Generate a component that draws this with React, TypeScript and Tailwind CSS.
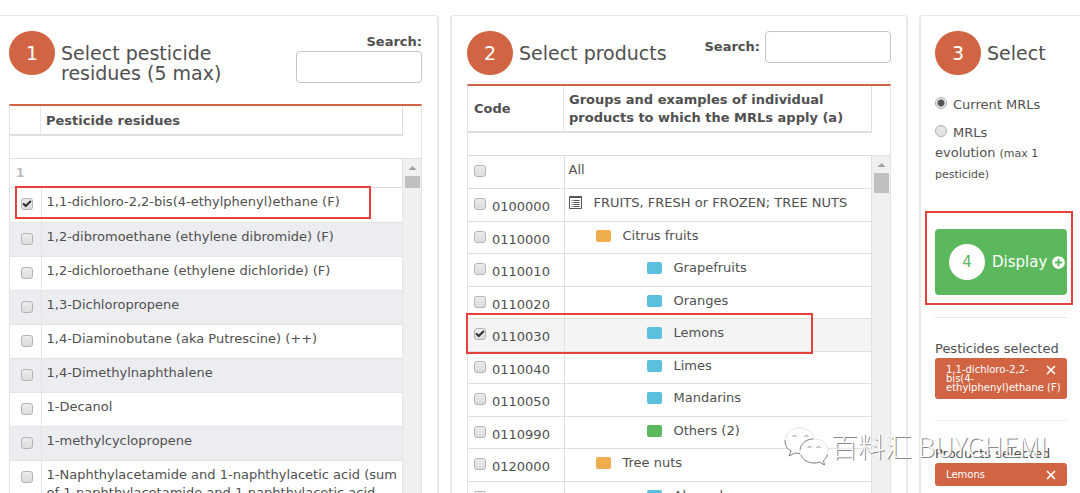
import type { ReactNode } from 'react'
import { Check, X } from 'lucide-react'
import { FaPlusCircle } from 'react-icons/fa'

const residues = [
  '1,1-dichloro-2,2-bis(4-ethylphenyl)ethane (F)',
  '1,2-dibromoethane (ethylene dibromide) (F)',
  '1,2-dichloroethane (ethylene dichloride) (F)',
  '1,3-Dichloropropene',
  '1,4-Diaminobutane (aka Putrescine) (++)',
  '1,4-Dimethylnaphthalene',
  '1-Decanol',
  '1-methylcyclopropene',
  '1-Naphthylacetamide and 1-naphthylacetic acid (sum of 1-naphthylacetamide and 1-naphthylacetic acid and its salts)',
]

type Kind = 'all' | 'root' | 'group' | 'item' | 'other'

const products: { code: string; name: string; kind: Kind }[] = [
  { code: '', name: 'All', kind: 'all' },
  { code: '0100000', name: 'FRUITS, FRESH or FROZEN; TREE NUTS', kind: 'root' },
  { code: '0110000', name: 'Citrus fruits', kind: 'group' },
  { code: '0110010', name: 'Grapefruits', kind: 'item' },
  { code: '0110020', name: 'Oranges', kind: 'item' },
  { code: '0110030', name: 'Lemons', kind: 'item' },
  { code: '0110040', name: 'Limes', kind: 'item' },
  { code: '0110050', name: 'Mandarins', kind: 'item' },
  { code: '0110990', name: 'Others (2)', kind: 'other' },
  { code: '0120000', name: 'Tree nuts', kind: 'group' },
  { code: '0120010', name: 'Almonds', kind: 'item' },
]

const markers: Record<Kind, ReactNode> = {
  all: null,
  root: <ListIcon />,
  group: <span className="ml-[27px] mr-3 h-3 w-[15px] rounded-[2px] bg-[#f0ad4e]" />,
  item: <span className="ml-[78px] mr-3 h-3 w-[15px] rounded-[2px] bg-[#5bc0de]" />,
  other: <span className="ml-[78px] mr-3 h-3 w-[15px] rounded-[2px] bg-[#5cb85c]" />,
}

function ListIcon() {
  return (
    <svg viewBox="0 0 13 13" className="mr-3 size-[13px]" fill="none" stroke="#555">
      <path d="M.5.5h12v12H.5z" />
      <path d="M1 1.5h11" />
      <path d="M2.5 4.5h1M2.5 6.5h1M2.5 8.5h1M2.5 10.5h1M4.5 4.5h6M4.5 6.5h6M4.5 8.5h6M4.5 10.5h6" />
    </svg>
  )
}

function WeChatIcon() {
  return (
    <svg viewBox="0 0 46 40" className="h-10 w-[46px]" fill="#fff">
      <g stroke="#e4e4e4" strokeWidth="1">
        <path d="M17 2C8 2 2 8 2 15c0 4 2 8 6 10l-2 5 6-3c2 .6 4 1 7 .8 C16 19 23 12 32 13 30 6 24 2 17 2z" />
        <path d="M31 13c-8 0-14 5-14 12s6 12 14 12c2 0 4-.4 5.500-1l5 3-1-4.500c3-2 4.500-5.500 4.500-9.500 0-7-6-12-14-12z" />
      </g>
      <g fill="none" stroke="#888" strokeWidth="1">
        <path d="M2 14c0 5 2 9 6 11l-2 5 6-3 5 .5" />
        <path d="M17 24c.5-6 6-11 13-11M18 29c2 5 7 8 13 8 2 0 4-.4 5.500-1l5 3-1-4.500c2-1.500 3.500-3.500 4-6" />
        <path d="M10 11c0-2 3-2 3 0M22 11c0-2 3-2 3 0M25 22c0-2 3-2 3 0M34 22c0-2 3-2 3 0" />
      </g>
    </svg>
  )
}

function Checkbox({ label, checked }: { label: string; checked?: boolean }) {
  return (
    <span className="grid size-3 shrink-0 place-items-center">
      <input
        type="checkbox"
        aria-label={label}
        defaultChecked={checked}
        className="peer col-start-1 row-start-1 size-3 appearance-none rounded-[3px] border border-[#b4b4b4] bg-linear-to-b from-[#ececec] to-[#dcdcdc]"
      />
      <Check
        strokeWidth={5}
        className="pointer-events-none invisible col-start-1 row-start-1 size-[10px] text-[#333] peer-checked:visible"
      />
    </span>
  )
}

function Radio({ id, checked }: { id: string; checked?: boolean }) {
  return (
    <input
      type="radio"
      name="mrls"
      id={id}
      defaultChecked={checked}
      className="mr-[6px] size-3 appearance-none rounded-full border border-[#b0b0b0] bg-[#e4e4e4] checked:bg-[radial-gradient(#555_0_3px,#e8e8e8_4px)]"
    />
  )
}

function Step({ number, title }: { number: number; title: string }) {
  return (
    <div className="flex min-w-0 flex-1 items-start gap-[6px]">
      <span className="flex h-11 w-[46px] shrink-0 items-center justify-center rounded-full bg-[#d06443] text-[19px] text-white">
        {number}
      </span>
      <h2 className="pt-3 text-[19px] leading-5">{title}</h2>
    </div>
  )
}

function ScrollBar({ thumb }: { thumb: ReactNode }) {
  return (
    <div className="flex w-[18px] shrink-0 flex-col items-center bg-[#f0f0f0]">
      <svg viewBox="0 0 17 17" className="size-[17px]" fill="#a0a0a0">
        <path d="M4.500 11l4-4 4 4z" />
      </svg>
      {thumb}
    </div>
  )
}

function Tag({ children }: { children: string }) {
  return (
    <div className="rounded-[3px] bg-[#d06443] py-[7px] pl-[11px] pr-1 text-[10px] leading-[9px] text-white">
      <button type="button" aria-label="Remove" className="float-right mr-[5px]">
        <X className="size-[14px] -my-[2px]" strokeWidth={3} />
      </button>
      {children}
    </div>
  )
}

export default function App() {
  return (
    <main className="relative h-screen overflow-hidden bg-white pt-[15px] font-['DejaVu_Sans',Verdana,sans-serif] text-[13px] leading-[18px] text-[#505050]">
      <div className="grid min-h-full grid-cols-[439fr_458fr_161fr] gap-[11px]">
        <section className="min-w-0 rounded-tr border-t border-r-2 border-[#e8e8e8] pt-[15px] pr-[15px] pl-[9px]">
          <div className="flex h-[73px] items-start">
            <Step number={1} title="Select pesticide residues (5 max)" />
            <label className="w-[126px] pt-[2px] text-right font-bold">
              Search:
              <input
                type="text"
                className="block h-8 w-full rounded border border-[#c4c4c4] px-2 font-normal"
              />
            </label>
          </div>
          <div className="border-t-2 border-x border-t-[#d06443] border-x-[#e4e4e4]">
            <div className="mr-[18px] flex h-[30px] border-r border-b-2 border-[#dedede] font-bold">
              <span className="w-[31px] border-r border-[#e8e8e8]" />
              <span className="px-[5px] pt-[6px]">Pesticide residues</span>
            </div>
            <div className="mt-[22px] flex border-t border-[#e0e0e0]">
              <div className="min-w-0 flex-1">
                <div className="h-[29px] border-r border-b border-[#dedede] px-[6px] pt-[6px] text-xs font-bold text-[#bbb]">
                  1
                </div>
                <table className="w-full table-fixed border-collapse">
                  <tbody>
                    {residues.map((name, index) => (
                      <tr
                        key={name}
                        className="relative h-[34px] border-r border-b border-[#e4e4e4] align-top even:bg-[#ecedf1]"
                      >
                        <td className="w-[31px] border-r border-[#e4e4e4] pt-[10px] pl-[11px]">
                          <Checkbox label={name} checked={index === 0} />
                          {index === 0 && (
                            <span className="pointer-events-none absolute -top-[2px] left-[5px] z-10 h-[33px] w-[356px] border-2 border-[#e8403c]" />
                          )}
                        </td>
                        <td className="pt-[5px] pl-[5px]">{name}</td>
                      </tr>
                    ))}
                  </tbody>
                </table>
              </div>
              <ScrollBar thumb={<span className="h-3 w-[15px] bg-[#c0c0c0]" />} />
            </div>
          </div>
        </section>

        <section className="min-w-0 rounded-t border-x-2 border-t border-[#e8e8e8] px-[15px] pt-[15px]">
          <div className="flex h-[53px] items-start">
            <Step number={2} title="Select products" />
            <label className="flex items-center gap-[5px] font-bold">
              Search:
              <input
                type="text"
                className="h-8 w-[126px] rounded border border-[#c4c4c4] px-2 font-normal"
              />
            </label>
          </div>
          <div className="border-t-2 border-x border-t-[#d06443] border-x-[#e4e4e4]">
            <div className="mr-[18px] flex h-[47px] items-center border-r border-b-2 border-[#dedede] font-bold">
              <span className="flex w-24 shrink-0 items-center self-stretch border-r border-[#e4e4e4] px-[6px]">
                Code
              </span>
              <span className="px-[5px]">
                Groups and examples of individual products to which the MRLs
                apply (a)
              </span>
            </div>
            <div className="mt-[22px] flex border-t border-[#e0e0e0]">
              <table className="min-w-0 flex-1 table-fixed border-collapse">
                <tbody>
                  {products.map(({ code, name, kind }) => (
                    <tr
                      key={name}
                      className={
                        name === 'Lemons'
                          ? 'relative h-[33px] border-r border-b border-[#e0e0e0] bg-[#f4f4f4] align-top'
                          : 'h-[33px] border-r border-b border-[#e0e0e0] align-top odd:h-8'
                      }
                    >
                      <td className="w-24 border-r border-[#e0e0e0] pt-[9px] pl-[6px]">
                        <div className="flex gap-[6px]">
                          <Checkbox label={name} checked={name === 'Lemons'} />
                          <span>{code}</span>
                        </div>
                        {name === 'Lemons' && (
                          <span className="pointer-events-none absolute -top-[5px] -left-[2px] z-10 h-[41px] w-[347px] border-2 border-[#e8403c]" />
                        )}
                      </td>
                      <td className="pt-[5px] pl-1">
                        <div className="flex items-center">
                          {markers[kind]}
                          {name}
                        </div>
                      </td>
                    </tr>
                  ))}
                </tbody>
              </table>
              <ScrollBar thumb={<span className="h-5 w-[15px] bg-[#c0c0c0]" />} />
            </div>
          </div>
        </section>

        <section className="min-w-0 rounded-tl border-t border-l-2 border-[#e8e8e8] pt-[15px] pr-[13px] pl-[14px]">
          <Step number={3} title="Select" />
          <div className="mt-[21px]">
            <Radio id="current" checked />
            <label htmlFor="current">Current MRLs</label>
          </div>
          <div className="mt-[9px] leading-5">
            <Radio id="evolution" />
            <label htmlFor="evolution">
              MRLs
              <br />
              evolution <small className="text-[11px]">(max 1 pesticide)</small>
            </label>
          </div>

          <div className="relative mt-11">
            <button
              type="button"
              className="flex h-[66px] w-full items-center rounded bg-[#5cb85c] pl-[14px] text-[15px] text-white"
            >
              <span className="mr-[7px] flex size-9 shrink-0 items-center justify-center rounded-full bg-white text-[#5cb85c]">
                4
              </span>
              Display
              <FaPlusCircle className="ml-[5px] size-[13px] shrink-0" />
            </button>
            <span className="pointer-events-none absolute -top-[18px] -right-[6px] -bottom-[10px] -left-[10px] border-2 border-[#e8403c]" />
          </div>

          <hr className="my-[22px] border-[#dde8f0]" />
          <h3>Pesticides selected</h3>
          <Tag>1,1-dichloro-2,2-bis(4-ethylphenyl)ethane (F)</Tag>
          <hr className="mt-[21px] mb-6 border-[#eee]" />
          <h3>Products selected</h3>
          <Tag>Lemons</Tag>
        </section>
      </div>

      <div className="pointer-events-none absolute right-[33px] bottom-[27px] z-20 flex items-center gap-[2px]">
        <WeChatIcon />
        <span className="font-['Noto_Sans_CJK_SC',sans-serif] text-[27px] leading-10 font-light whitespace-nowrap text-white [text-shadow:1px_1px_0_#888]">
          百料汇 BUYCHEMI
        </span>
      </div>
    </main>
  )
}
